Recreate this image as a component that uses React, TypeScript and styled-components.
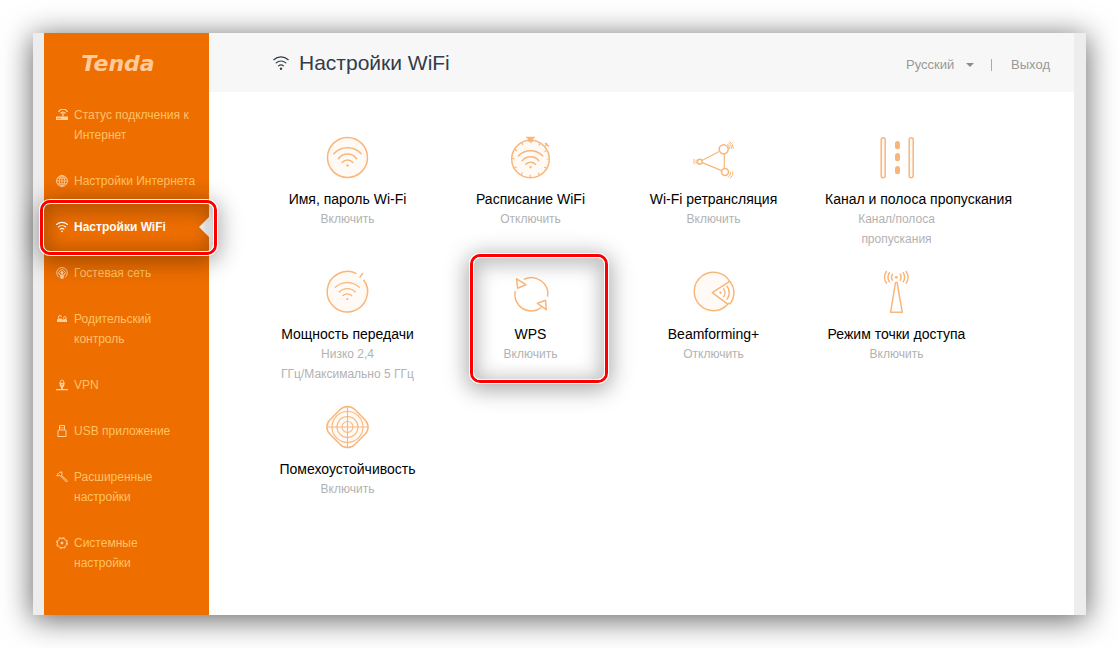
import React from "react";
import styled, { createGlobalStyle, css } from "styled-components";

const GlobalStyle = createGlobalStyle`
  * { box-sizing: border-box; }
  body {
    margin: 0;
    background: #ffffff;
    font-family: "Liberation Sans", Arial, sans-serif;
    font-size: 12px;
    line-height: 20px;
  }
  a { color: inherit; text-decoration: none; }
`;

const Page = styled.div`
  display: flex;
  min-height: 100vh;
  padding: 33px;
`;

const Frame = styled.div`
  flex: 1;
  display: flex;
  padding: 0 12px 0 11px;
  background: #ededed;
  box-shadow: 0 4px 28px 1px rgba(0, 0, 0, 0.6);
`;

const Sidebar = styled.aside`
  flex: 0 0 165px;
  position: relative;
  z-index: 1;
  background: #ee6e00;
`;

const Logo = styled.div`
  height: 59px;
  padding-right: 17px;
  text-align: center;
  font: italic bold 22px/62px "DejaVu Sans", sans-serif;
  color: #ffcb9c;
`;

const Menu = styled.nav`
  display: flex;
  flex-direction: column;
`;

const MenuLink = styled.a<{ $active?: boolean }>`
  position: relative;
  display: flex;
  gap: 6px;
  padding: 13px 12px;
  color: ${(p) => (p.$active ? "#ffffff" : "#ffc266")};
  font-weight: ${(p) => (p.$active ? "bold" : "normal")};

  svg {
    flex: none;
    width: 12px;
    height: 12px;
    margin-top: 4px;
    color: ${(p) => (p.$active ? "#ffffff" : "#ffd0a0")};
  }

  ${(p) =>
    p.$active &&
    css`
      &::before {
        content: "";
        position: absolute;
        top: 13px;
        right: 0;
        border: solid transparent;
        border-width: 10px 10px 10px 0;
        border-right-color: #f7f7f7;
      }
    `}
`;

const Highlight = styled.span<{ $inset: string }>`
  position: absolute;
  inset: ${(p) => p.$inset};
  z-index: 2;
  pointer-events: none;
  border: 1px solid #ffffff;
  border-radius: 11px;
  box-shadow: 0 4px 22px 2px rgba(0, 0, 0, 0.34);

  &::before {
    content: "";
    position: absolute;
    inset: 0;
    border: 3px solid #fa0000;
    border-radius: 10px;
  }

  &::after {
    content: "";
    position: absolute;
    inset: 3px;
    border: 1px solid #ffffff;
    border-radius: 7px;
    box-shadow: inset 0 3px 18px 5px rgba(0, 0, 0, 0.24);
  }
`;

const Main = styled.main`
  flex: 1;
  min-width: 0;
  background: #ffffff;
`;

const Header = styled.header`
  display: flex;
  align-items: center;
  justify-content: space-between;
  height: 59px;
  padding: 0 24px 0 64px;
  background: #f7f7f7;
`;

const Title = styled.h1`
  display: flex;
  align-items: center;
  gap: 10px;
  margin: 0;
  font-size: 21px;
  font-weight: normal;
  line-height: 24px;
  color: #333c4a;

  svg { width: 16px; height: 16px; }
`;

const Account = styled.div`
  display: flex;
  align-items: center;
  padding-top: 4px;
  font-size: 13px;
  color: #999999;
`;

const Language = styled.label`
  display: flex;
  align-items: center;
  gap: 10px;
`;

const LanguageSelect = styled.select`
  appearance: none;
  width: 50px;
  padding: 0;
  border: 0;
  background: transparent;
  color: inherit;
  font: inherit;
`;

const Caret = styled.span`
  border: solid transparent;
  border-width: 4px 4px 0;
  border-top-color: #8c8c8c;
`;

const Divider = styled.span`
  width: 1px;
  height: 12px;
  margin: 0 19px 0 17px;
  background: #8fc08a;
`;

const Tiles = styled.div`
  display: grid;
  grid-template-columns: repeat(4, minmax(0, 183px));
  grid-auto-rows: 135px;
  padding: 44px 0 0 47px;
`;

const Tile = styled.a`
  position: relative;
  display: flex;
  flex-direction: column;
  align-items: center;
  padding: 0 20px;
  text-align: center;
  color: #b2b2b2;

  svg { width: 43px; height: 43px; margin-bottom: 10px; overflow: visible; }
`;

const TileName = styled.strong`
  width: 100%;
  font-size: 14px;
  font-weight: normal;
  white-space: nowrap;
  color: #000000;
`;

const TileStatus = styled.span`
  width: 100%;
  white-space: pre-line;
`;

const arcs = {
  wide: "M7.3 17.3A18.6 18.6 0 0 1 34.7 17.3M12 22.3A11 11 0 0 1 30 22.3M15.7 25.9A7.2 7.2 0 0 1 26.3 25.9",
  narrow: "M9.3 16.3A18 18 0 0 1 33.3 16.3M13.3 21A11 11 0 0 1 29.3 21M16.8 24.7A6.5 6.5 0 0 1 25.8 24.7",
};

const TileSvg = ({ children }: { children: React.ReactNode }) => (
  <svg viewBox="0 0 43 43" fill="none" stroke="#f9b679" strokeWidth="1.5" aria-hidden="true">
    {children}
  </svg>
);

const tileIcons: Record<string, React.ReactNode> = {
  name: (
    <>
      <circle cx="21.5" cy="21.5" r="20" fill="#fffaf6" />
      <g transform="translate(.5 .5)">
        <path d={arcs.wide} strokeLinecap="round" />
        <circle cx="21" cy="29" r="1.2" fill="#f9b679" stroke="none" />
      </g>
    </>
  ),
  schedule: (
    <>
      <circle cx="21.5" cy="23" r="18.8" fill="#fffaf6" />
      <circle cx="21.5" cy="23" r="17" strokeWidth="2.4" strokeDasharray="1.2 7.7" strokeDashoffset=".6" />
      <path d="M17 1.4h9M19 2.4h5l-1 3h-3z" fill="#f9b679" strokeWidth="1.1" />
      <path d="M36 7l4 3.5M36.3 10l2-2.5" />
      <g transform="translate(1.2 3.1) scale(.97)">
        <path
          d="M8.5 17.3A17.6 17.6 0 0 1 33.5 17.3M12.5 22.3A11 11 0 0 1 29.5 22.3M16 26A7 7 0 0 1 26 26"
          strokeLinecap="round"
        />
        <circle cx="21" cy="29" r="1.2" fill="#f9b679" stroke="none" />
      </g>
    </>
  ),
  relay: (
    <g transform="translate(0 1)">
      <path d="M10 23.5L27.7 14.3M32.3 16.8v14.5M10.3 25.6L29.7 33.6" strokeWidth="1.2" />
      <circle cx="31.7" cy="12.3" r="4.5" strokeWidth="1.6" />
      <circle cx="33" cy="35" r="3.5" strokeWidth="1.6" />
      <circle cx="7.8" cy="24.7" r="2.4" />
      <path
        d="M35.5 7.2a6 6 0 0 1 2.2 4.8M36.5 5.7a8 8 0 0 1 3.3 6.5M37.5 4.4a10 10 0 0 1 4 7M36.2 40.3a6 6 0 0 0 2.4-5.3M38 41.4a8 8 0 0 0 3-6.8M4.3 22.8a5 5 0 0 0 0 3.8M2.3 22a7 7 0 0 0 0 5.4"
        strokeWidth="1"
      />
    </g>
  ),
  channel: (
    <g transform="translate(.5 1)">
      <rect x="5.7" y=".7" width="4" height="40" rx="2" fill="#fffaf6" />
      <rect x="33.7" y=".7" width="4" height="40" rx="2" fill="#fffaf6" />
      <g fill="#f9b577" stroke="none">
        <rect x="19.5" y="4" width="5" height="8.3" rx="2.5" />
        <rect x="19.5" y="16" width="5" height="8.3" rx="2.5" />
        <rect x="19.5" y="29" width="5" height="8.3" rx="2.5" />
      </g>
    </g>
  ),
  power: (
    <>
      <path d="M30.5 2.7A20.2 20.2 0 1 0 37.6 8.7" fill="#fffaf6" />
      <path d="M36.9 2l-3.2 4.6" />
      <path d={arcs.narrow} strokeWidth="1.2" strokeLinecap="round" />
      <circle cx="21.3" cy="28" r="1.1" fill="#f9b679" stroke="none" />
    </>
  ),
  wps: (
    <>
      <path d="M14.8 8.4A16.5 16.5 0 0 1 38.6 25.7M6.2 20A16.5 16.5 0 0 0 32.5 36.5" />
      <path d="M7.6 7.8L16.9 13.7 8.6 17.3zM28.4 32.3L36.5 29.3 37.3 38.7z" strokeLinejoin="round" />
    </>
  ),
  beam: (
    <g transform="translate(.5 0)">
      <path d="M37.2 10.3A19.2 19.2 0 1 0 35.3 33.2L19.8 21.7z" fill="#fffaf6" strokeLinejoin="round" />
      <path d="M37.2 10.3A17.5 17.5 0 0 1 37.5 32.7L35.3 32.3" />
      <path d="M30.8 17.2a7 7 0 0 1 0 9M34.3 14.8a11 11 0 0 1 0 13.8" />
      <circle cx="28" cy="21.7" r="1.2" fill="#f9b679" stroke="none" />
    </g>
  ),
  access: (
    <>
      <path d="M20.5 11.5h1.6L27.3 41.3H15.6z" strokeLinejoin="round" />
      <circle cx="21.3" cy="6.3" r="1.4" fill="#f9b679" stroke="none" />
      <path d="M17.7 2.8a6 6 0 0 0 0 7M14.7 1.3a8.5 8.5 0 0 0 0 10M11.7 0a10.5 10.5 0 0 0 0 12.6M24.9 2.8a6 6 0 0 1 0 7M27.9 1.3a8.5 8.5 0 0 1 0 10M30.9 0a10.5 10.5 0 0 1 0 12.6" />
    </>
  ),
  immunity: (
    <>
      <rect x="4" y="3.5" width="35" height="35" rx="10" fill="#fffaf6" transform="rotate(45 21.5 21)" />
      <g strokeWidth="1.1">
        <circle cx="21.5" cy="21" r="15.5" />
        <circle cx="21.5" cy="21" r="10.5" />
        <circle cx="21.5" cy="21" r="5.5" />
        <path d="M21.5 1v40M1.5 21h40" />
      </g>
    </>
  ),
};

const WifiGlyph = ({ weight = 1.5 }: { weight?: number }) => (
  <svg viewBox="0 0 16 16" fill="none" stroke="currentColor" strokeWidth={weight} aria-hidden="true">
    <path
      d="M.8 4.7A10.5 10.5 0 0 1 15.2 4.7M3.2 7.9A7 7 0 0 1 12.8 7.9M5.5 10.9A4 4 0 0 1 10.5 10.9"
      strokeLinecap="round"
    />
    <circle cx="8" cy="13.8" r="1.2" fill="currentColor" stroke="none" />
  </svg>
);

const SmallSvg = ({ children }: { children: React.ReactNode }) => (
  <svg viewBox="0 0 12 12" fill="none" stroke="currentColor" strokeWidth="1" aria-hidden="true">
    {children}
  </svg>
);

const menu = [
  {
    label: "Статус подклчения к Интернет",
    icon: (
      <SmallSvg>
        <path d="M0 7.5h12V11H0z" fill="currentColor" stroke="none" />
        <path d="M7 7.5V4M2.5 3A5 5 0 0 1 11.5 3M4.5 4.5A3 3 0 0 1 9.5 4.5" strokeWidth="1.3" />
        <path d="M1.5 9.5h1M3.5 9.5h1" stroke="#ee6e00" />
      </SmallSvg>
    ),
  },
  {
    label: "Настройки Интернета",
    icon: (
      <SmallSvg>
        <circle cx="6" cy="6" r="5.4" />
        <ellipse cx="6" cy="6" rx="2.6" ry="5.4" strokeWidth=".8" />
        <path d="M6 .5v11M.5 6h11M1.5 3.2h9M1.5 8.8h9" strokeWidth=".8" />
      </SmallSvg>
    ),
  },
  { label: "Настройки WiFi", icon: <WifiGlyph />, active: true },
  {
    label: "Гостевая сеть",
    icon: (
      <SmallSvg>
        <path d="M3 10.2A5.3 5.3 0 1 1 9 10.2M3.6 8A3.2 3.2 0 1 1 8.4 8" />
        <circle cx="6" cy="5.5" r="1.5" fill="currentColor" stroke="none" />
        <path d="M4 7.6h4l-.6 4.2H4.6z" fill="currentColor" stroke="none" />
      </SmallSvg>
    ),
  },
  {
    label: "Родительский контроль",
    icon: (
      <SmallSvg>
        <path d="M1 9V6.6L3 5.5h2.5L7 6.8 8.5 6H10L11 7v2z" fill="currentColor" stroke="none" />
        <path d="M2.5 5.5V4A1.5 1.5 0 0 1 5.5 4M7.7 5.8V4.3A1.2 1.2 0 0 1 10 4.3V6" />
      </SmallSvg>
    ),
  },
  {
    label: "VPN",
    icon: (
      <SmallSvg>
        <path d="M4.3 4V2.8A1.7 1.7 0 0 1 7.7 2.8V4" />
        <path d="M3.2 3.7h5.6L8 7.8H7V10h5v1.2H0V10h5V7.8H4z" fill="currentColor" stroke="none" />
        <path d="M6 4.8v1.5" stroke="#ee6e00" />
      </SmallSvg>
    ),
  },
  {
    label: "USB приложение",
    icon: (
      <SmallSvg>
        <path d="M3.5 5V.5h5V5M2.5 5h7l.5 1v5.5H2V6zM5 2v1.5M7 2v1.5" />
      </SmallSvg>
    ),
  },
  {
    label: "Расширенные настройки",
    icon: (
      <SmallSvg>
        <path d="M.7 4L3.8 1.2 6.2 1 5.5 2 6.2 3.5 4.5 5 3.2 4 1.7 5.2zM5.3 4.3L11.5 9.8 10.5 11 4.5 5" />
      </SmallSvg>
    ),
  },
  {
    label: "Системные настройки",
    icon: (
      <SmallSvg>
        <circle cx="6" cy="6" r="4.7" />
        <circle cx="6" cy="6" r="5.5" strokeDasharray="2.3 2.02" />
        <circle cx="6" cy="6" r="1" fill="currentColor" />
      </SmallSvg>
    ),
  },
];

const tiles = [
  { icon: "name", name: "Имя, пароль Wi-Fi", status: "Включить" },
  { icon: "schedule", name: "Расписание WiFi", status: "Отключить" },
  { icon: "relay", name: "Wi-Fi ретрансляция", status: "Включить" },
  { icon: "channel", name: "Канал и полоса пропускания", status: "Канал/полоса пропускания" },
  { icon: "power", name: "Мощность передачи", status: "Низко 2,4\nГГц/Максимально 5 ГГц" },
  { icon: "wps", name: "WPS", status: "Включить", marked: true },
  { icon: "beam", name: "Beamforming+", status: "Отключить" },
  { icon: "access", name: "Режим точки доступа", status: "Включить" },
  { icon: "immunity", name: "Помехоустойчивость", status: "Включить" },
];

export default function App() {
  return (
    <>
      <GlobalStyle />
      <Page>
        <Frame>
          <Sidebar>
            <Logo>Tenda</Logo>
            <Menu>
              {menu.map((item) => (
                <MenuLink key={item.label} href="#" $active={item.active}>
                  {item.icon}
                  <span>{item.label}</span>
                  {item.active && <Highlight $inset="-5px -9px -6px -5px" />}
                </MenuLink>
              ))}
            </Menu>
          </Sidebar>
          <Main>
            <Header>
              <Title>
                <WifiGlyph weight={1.2} />
                Настройки WiFi
              </Title>
              <Account>
                <Language>
                  <LanguageSelect aria-label="Язык">
                    <option>Русский</option>
                  </LanguageSelect>
                  <Caret />
                </Language>
                <Divider />
                <a href="#">Выход</a>
              </Account>
            </Header>
            <Tiles>
              {tiles.map((tile) => (
                <Tile key={tile.name} href="#">
                  <TileSvg>{tileIcons[tile.icon]}</TileSvg>
                  <TileName>{tile.name}</TileName>
                  <TileStatus>{tile.status}</TileStatus>
                  {tile.marked && <Highlight $inset="-18px 13px 22px 30px" />}
                </Tile>
              ))}
            </Tiles>
          </Main>
        </Frame>
      </Page>
    </>
  );
}
